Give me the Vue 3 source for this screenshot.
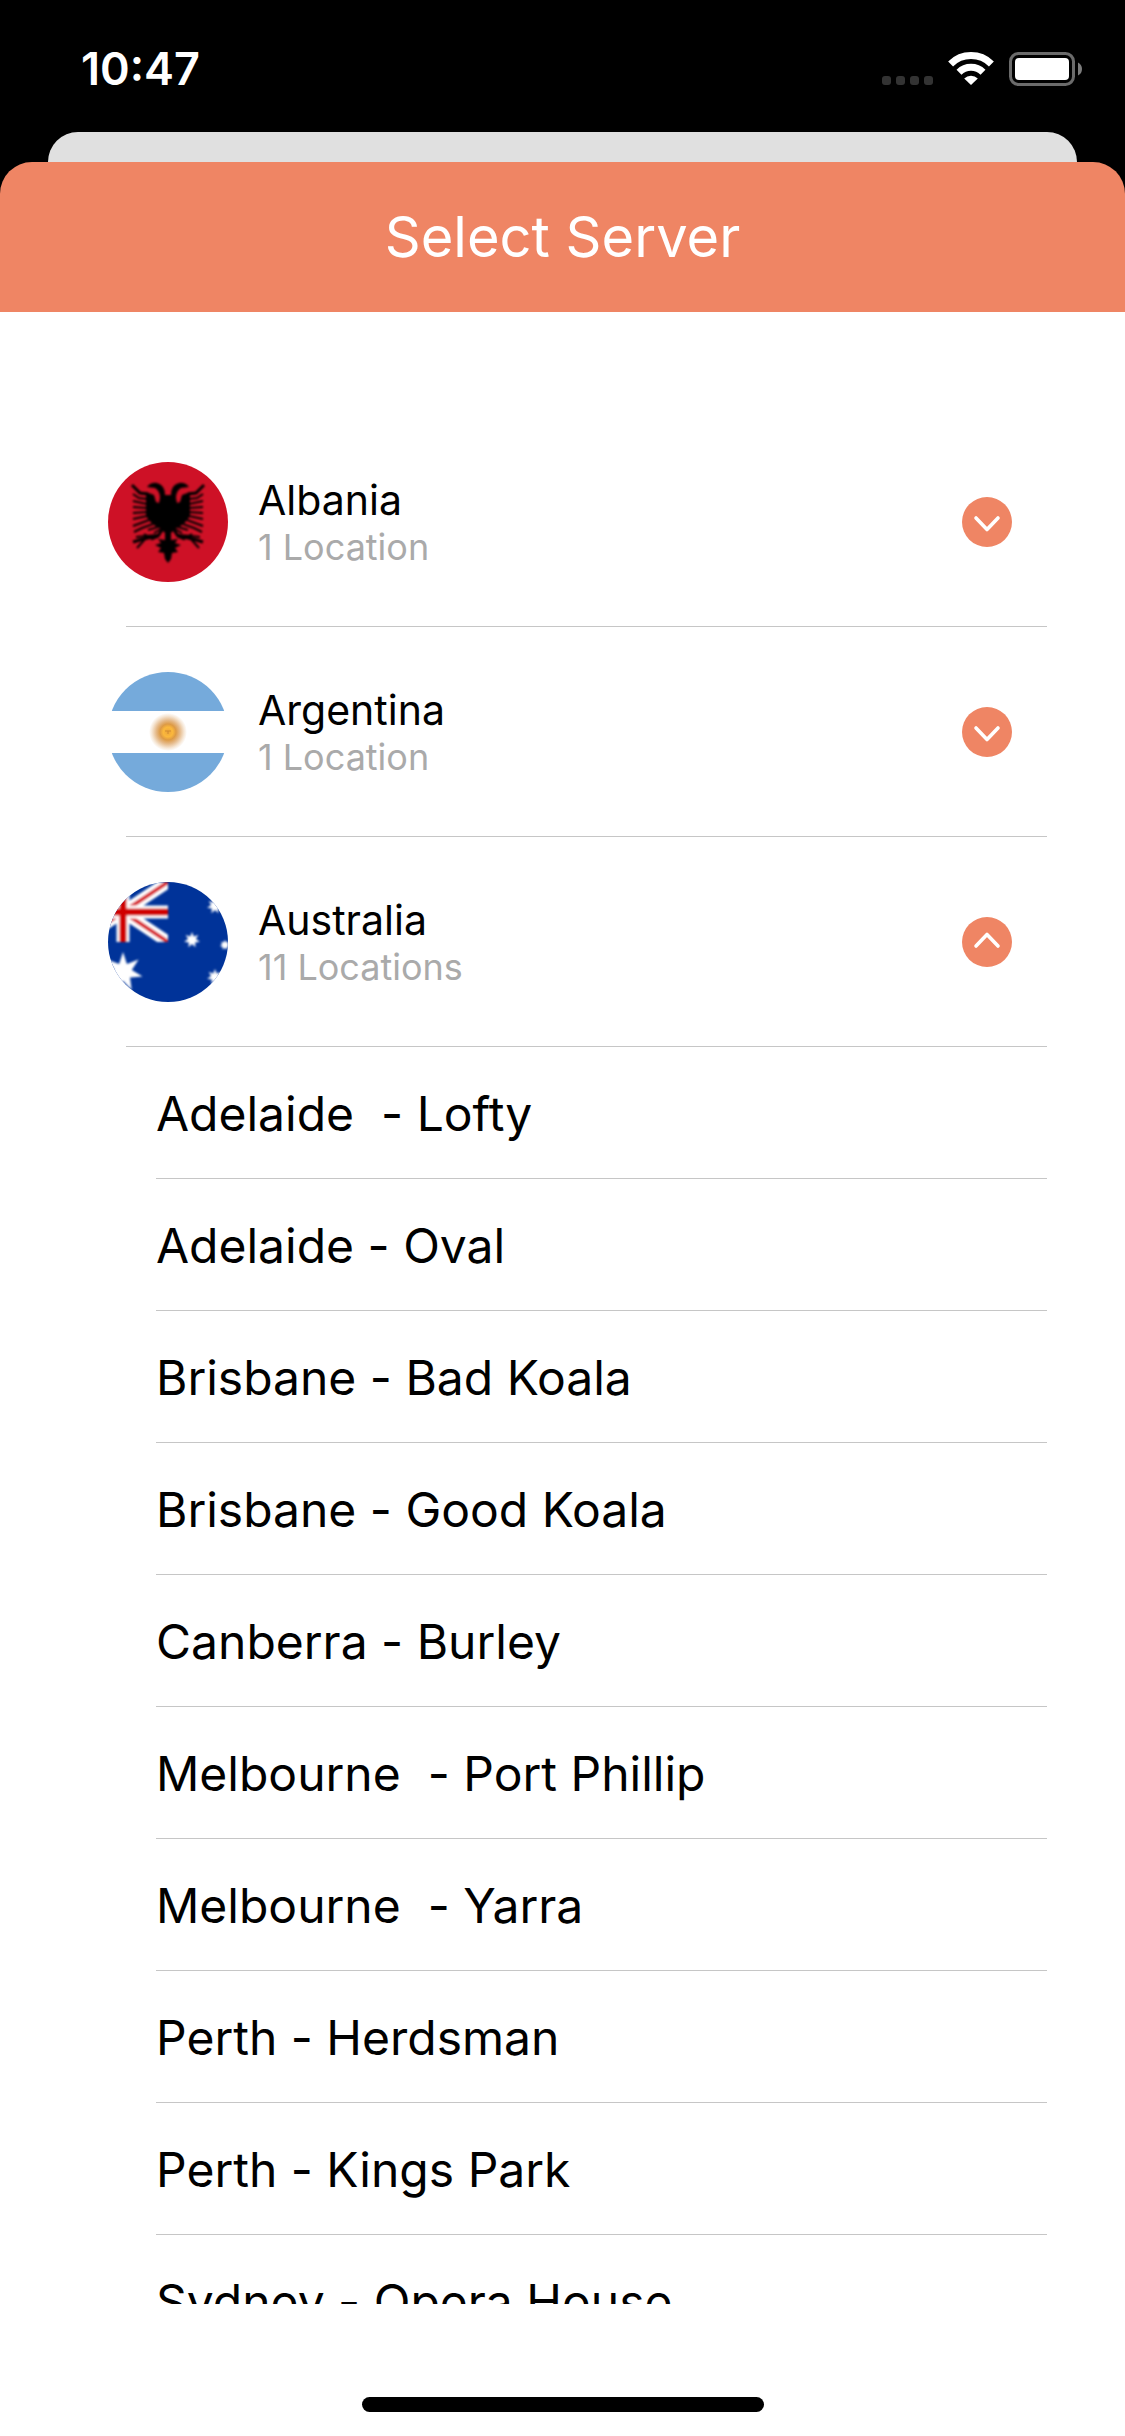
<script setup>
import { ref } from 'vue'

const countries = ref([
  { name: 'Albania', count: '1 Location', flag: 'al', open: false, servers: [] },
  { name: 'Argentina', count: '1 Location', flag: 'ar', open: false, servers: [] },
  {
    name: 'Australia',
    count: '11 Locations',
    flag: 'au',
    open: true,
    servers: [
      'Adelaide  - Lofty',
      'Adelaide - Oval',
      'Brisbane - Bad Koala',
      'Brisbane - Good Koala',
      'Canberra - Burley',
      'Melbourne  - Port Phillip',
      'Melbourne  - Yarra',
      'Perth - Herdsman',
      'Perth - Kings Park',
      'Sydney - Opera House',
    ],
  },
])

// Seven-pointed star polygon around (cx, cy)
function star(cx, cy, outer, inner) {
  const points = []
  for (let i = 0; i < 14; i++) {
    const r = i % 2 ? inner : outer
    const a = (Math.PI * i) / 7 - Math.PI / 2
    points.push(`${(cx + r * Math.cos(a)).toFixed(1)},${(cy + r * Math.sin(a)).toFixed(1)}`)
  }
  return points.join(' ')
}

const stars = [
  star(15, 90, 20, 9),
  star(84, 58, 8, 4),
  star(107, 24, 8, 4),
  star(117, 63, 5, 3),
  star(107, 95, 8, 4),
]
</script>

<template>
  <div class="screen">
    <div class="top">
      <div class="status">
        <time class="clock">10:47</time>
        <div class="indicators">
          <span class="dots"><i></i><i></i><i></i><i></i></span>
          <svg class="wifi" viewBox="0 0 46 33" aria-label="Wi-Fi">
            <g fill="none" stroke="#fff" stroke-width="7">
              <path d="M2.6 12 A29 29 0 0 1 43.400 12" />
              <path d="M11 20.200 A17 17 0 0 1 35 20.200" />
            </g>
            <path d="M16.200 26.400 A10 10 0 0 1 29.800 26.400 L23 33 Z" fill="#fff" />
          </svg>
          <svg class="battery" viewBox="0 0 73 34" aria-label="Battery full">
            <rect x="1.5" y="1.5" width="63" height="31" rx="8" fill="none" stroke="#6b6b6b" stroke-width="3" />
            <rect x="6" y="6" width="54" height="22" rx="4" fill="#fff" />
            <path d="M69 10.500 Q73 12.500 73 17 Q73 21.500 69 23.500 Z" fill="#7c7c7c" />
          </svg>
        </div>
      </div>
      <div class="behind"></div>
      <header class="header"><h1>Select Server</h1></header>
    </div>

    <main class="scroller">
      <ul class="countries">
        <li v-for="c in countries" :key="c.name">
          <div class="country">
            <button type="button" class="country-button" :aria-expanded="c.open" @click="c.open = !c.open">
              <svg class="flag" viewBox="0 0 120 120" aria-hidden="true">
                <defs>
                  <clipPath :id="'round-' + c.flag"><circle cx="60" cy="60" r="60" /></clipPath>
                  <filter :id="'soft-' + c.flag"><feGaussianBlur stdDeviation="0.9" /></filter>
                </defs>
                <g :clip-path="`url(#round-${c.flag})`">
                  <template v-if="c.flag === 'al'">
                    <rect width="120" height="120" fill="#ce1126" />
                    <g filter="url(#soft-al)">
                      <g v-for="side in [1, -1]" :key="side" :transform="side === 1 ? '' : 'translate(120 0) scale(-1 1)'">
                        <path d="M60 33 L57 33 Q57 23 49 21 Q43 20 39 25 L47 26 Q52 29 52 36 L51 41 L48 40 L46 33 L38 30 L38 54 Q43 63 53 67 L57 71 L57 78 L50 77 L53 81 L47 83 L53 86 L50 90 L56 91 L57 97 L60 101 Z" />
                        <g fill="none" stroke="#000">
                          <path stroke-width="3" d="M40 32 L32 31 L24 23" />
                          <path stroke-width="2" d="M39 37 L31 36 L25 32 M39 42 L25 39 M39 46 L25 45 M39 50 L25 51 M39 54 L25 57 M41 58 L33 61 L25 64 M45 62 L34 66 L26 70 M50 65 L40 68 M53 67 L46 71" />
                          <path stroke-width="3" d="M56 65 L50 74 L43 77 M45 75 L35 77 L25 80" />
                          <path stroke-width="2" d="M50 73 L38 74 L28 75 M38 76 L29 86 M43 76 L36 72" />
                        </g>
                      </g>
                    </g>
                  </template>
                  <template v-else-if="c.flag === 'ar'">
                    <defs>
                      <radialGradient id="sun">
                        <stop offset="0" stop-color="#eda63c" />
                        <stop offset="0.25" stop-color="#fbb83c" />
                        <stop offset="0.42" stop-color="#dd9a45" />
                        <stop offset="0.62" stop-color="#e5b988" />
                        <stop offset="0.85" stop-color="#f6e7d6" />
                        <stop offset="1" stop-color="#fff" />
                      </radialGradient>
                    </defs>
                    <rect width="120" height="120" fill="#fff" />
                    <rect width="120" height="39" fill="#75aadb" />
                    <rect y="81" width="120" height="39" fill="#75aadb" />
                    <circle cx="60" cy="60" r="19" fill="url(#sun)" />
                    <path d="M57 59 H63 M60 59 V62" fill="none" stroke="#d08a30" stroke-width="1" />
                  </template>
                  <template v-else>
                    <defs>
                      <clipPath id="canton"><rect x="-30" y="0" width="90" height="60" /></clipPath>
                    </defs>
                    <rect width="120" height="120" fill="#039" />
                    <g filter="url(#soft-au)">
                      <g clip-path="url(#canton)" fill="none">
                        <path d="M-30 0 L60 60 M-30 60 L60 0" stroke="#fff" stroke-width="12" />
                        <path d="M-30 0 L60 60 M-30 60 L60 0" stroke="#d8262f" stroke-width="4" />
                        <path d="M15 0 V60 M-30 30 H60" stroke="#fff" stroke-width="13" />
                        <path d="M15 0 V60 M-30 30 H60" stroke="#d00000" stroke-width="7" />
                      </g>
                      <polygon v-for="s in stars" :key="s" :points="s" fill="#fff" />
                    </g>
                  </template>
                </g>
              </svg>
              <span class="label">
                <span class="name">{{ c.name }}</span>
                <span class="count">{{ c.count }}</span>
              </span>
              <svg class="chevron" viewBox="0 0 50 50" aria-hidden="true">
                <circle cx="25" cy="25" r="25" fill="#ef8564" />
                <path
                  :d="c.open ? 'M14 29 L25 17.500 L36 29' : 'M14 21 L25 32.500 L36 21'"
                  fill="none" stroke="#fff" stroke-width="3.6" stroke-linecap="round" stroke-linejoin="round"
                />
              </svg>
            </button>
          </div>
          <ul v-if="c.open" class="servers">
            <li v-for="s in c.servers" :key="s"><button type="button" class="server">{{ s }}</button></li>
          </ul>
        </li>
      </ul>
    </main>

    <footer class="home"><span class="home-bar"></span></footer>
  </div>
</template>

<style>
body {
  margin: 0;
}
</style>

<style scoped>
.screen {
  display: flex;
  flex-direction: column;
  height: 100vh;
  background: #fff;
  color: #000;
  font-family: Inter, "Liberation Sans", sans-serif;
}
ul {
  list-style: none;
  margin: 0;
  padding: 0;
}
button {
  border: 0;
  padding: 0;
  background: none;
  color: inherit;
  font: inherit;
  text-align: left;
  cursor: pointer;
}
.top {
  flex: none;
  background: #000;
}
.status {
  display: flex;
  justify-content: space-between;
  align-items: flex-start;
  box-sizing: border-box;
  height: 132px;
  padding: 45px 43px 0 81px;
}
.clock {
  color: #fff;
  font-size: 45px;
  font-weight: 600;
  line-height: 48px;
}
.indicators {
  display: flex;
  align-items: flex-end;
  height: 41px;
}
.dots {
  display: flex;
  gap: 5px;
  margin-bottom: 1px;
}
.dots i {
  width: 9px;
  height: 9px;
  border-radius: 3px;
  background: #333;
}
.wifi {
  width: 46px;
  height: 33px;
  margin: 0 15px 1px;
}
.battery {
  width: 73px;
  height: 34px;
}
.behind {
  height: 30px;
  margin: 0 48px;
  border-radius: 30px 30px 0 0;
  background: #e0e0e0;
}
.header {
  border-radius: 32px 32px 0 0;
  background: #ef8564;
  text-align: center;
}
.header h1 {
  margin: 0;
  color: #fff;
  font-size: 56px;
  font-weight: 400;
  line-height: 150px;
}
.scroller {
  flex: 1;
  min-height: 0;
  margin-top: 105px;
  overflow-y: auto;
  scrollbar-width: none;
}
.country {
  margin: 0 78px 0 126px;
  border-bottom: 1px solid #c6c6c6;
}
.country-button {
  display: flex;
  align-items: center;
  width: calc(100% + 18px);
  height: 209px;
  margin-left: -18px;
  padding-right: 35px;
}
.flag {
  flex: none;
  width: 120px;
  height: 120px;
}
.label {
  display: flex;
  flex: 1;
  flex-direction: column;
  margin-left: 30px;
  padding-top: 4px;
  line-height: 47px;
}
.name {
  font-size: 41px;
}
.count {
  color: #aaa;
  font-size: 36px;
}
.chevron {
  flex: none;
  width: 50px;
  height: 50px;
}
.servers {
  margin: 0 78px 0 156px;
}
.servers li {
  border-bottom: 1px solid #c6c6c6;
}
.server {
  display: block;
  width: 100%;
  padding-top: 3px;
  font-size: 48px;
  font-feature-settings: "calt" 0;
  line-height: 128px;
  white-space: pre;
}
.home {
  display: flex;
  flex: none;
  justify-content: center;
  align-items: flex-end;
  box-sizing: border-box;
  height: 132px;
  padding-bottom: 24px;
}
.home-bar {
  width: 402px;
  height: 15px;
  border-radius: 8px;
  background: #000;
}
</style>
